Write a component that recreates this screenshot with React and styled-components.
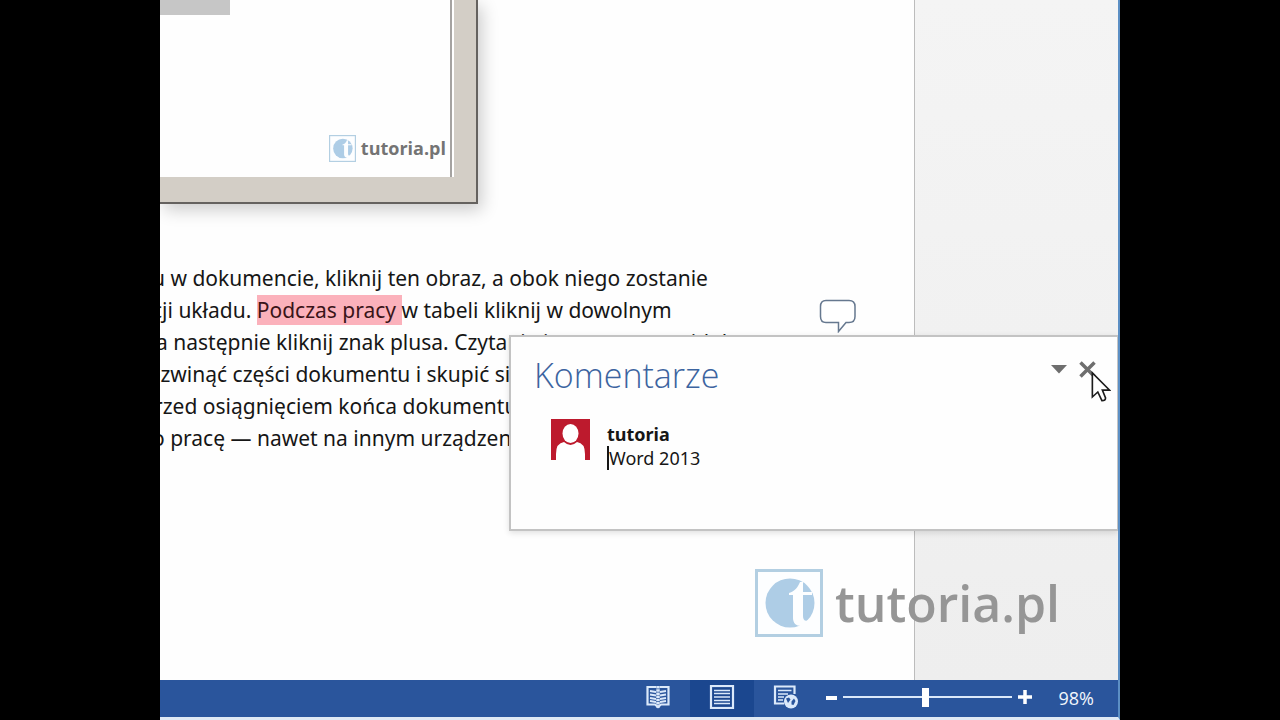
import React, { useState } from "react";
import styled, { createGlobalStyle } from "styled-components";

const lines = [
  { cut: 8, text: "u w dokumencie, kliknij ten obraz, a obok niego zostanie" },
  { cut: 8, text: "cji układu. ", marked: "Podczas pracy ", rest: "w tabeli kliknij w dowolnym" },
  { cut: 4, text: "a następnie kliknij znak plusa. Czytanie jest proste w widoku" },
  { cut: 12, text: "ozwinąć części dokumentu i skupić się" },
  { cut: 6, text: "rzed osiągnięciem końca dokumentu" },
  { cut: 8, text: "o pracę — nawet na innym urządzeniu" },
];

const Logo = ({ size }) => (
  <svg width={size} height={size} viewBox="0 0 68 68" aria-hidden="true">
    <rect x="1.5" y="1.5" width="65" height="65" fill="#fdfeff" stroke="#b3cfe2" strokeWidth="3" />
    <circle cx="35" cy="34" r="24.5" fill="#aecde6" />
    <path
      d="M34 24C40 22 43 18 45 13h3v10h9v3h-9v21c0 5 3 6 8 3l1 2c-3 4-7 5-11 5c-5 0-8-3-8-8V26h-4z"
      fill="#fdfeff"
    />
  </svg>
);

const App = () => {
  const [zoom, setZoom] = useState(98);
  const [comment, setComment] = useState("Word 2013");

  return (
    <Screen>
      <GlobalStyle />
      <Word>
        <Canvas>
          <Page>
            <Picture>
              <PictureInside>
                <GreyBlock />
                <SmallBrand>
                  <Logo size={27} />
                  <span>tutoria.pl</span>
                </SmallBrand>
              </PictureInside>
            </Picture>
            <Paragraph>
              {lines.map((line) => (
                <Line key={line.text} $cut={line.cut}>
                  {line.text}
                  {line.marked && <Marked>{line.marked}</Marked>}
                  {line.rest}
                </Line>
              ))}
            </Paragraph>
            <CommentMark type="button" aria-label="Komentarz">
              <svg width="38" height="34" viewBox="0 0 38 34">
                <path
                  d="M7 1.500H30Q36 1.500 36 7.500V17.500Q36 23.500 30 23.500H27L19.500 32.500V23.500H7Q1.500 23.500 1.500 17.500V7.500Q1.500 1.500 7 1.500Z"
                  fill="#fff"
                  stroke="#66788f"
                  strokeWidth="1.500"
                />
              </svg>
            </CommentMark>
          </Page>
          <Watermark>
            <Logo size={68} />
            <span>tutoria.pl</span>
          </Watermark>
        </Canvas>

        <Panel>
          <PanelHeader>
            <h2>Komentarze</h2>
            <PanelButton type="button" aria-label="Opcje">
              <svg width="16" height="9" viewBox="0 0 16 9">
                <path d="M0 0H16L8 8.500Z" fill="#6e6e6e" />
              </svg>
            </PanelButton>
            <PanelButton type="button" aria-label="Zamknij">
              <svg width="17" height="17" viewBox="0 0 17 17">
                <path d="M1.500 1.500L15.500 15.500M15.500 1.500L1.500 15.500" stroke="#6e6e6e" strokeWidth="3.500" />
              </svg>
            </PanelButton>
          </PanelHeader>
          <Comment>
            <svg width="39" height="41" viewBox="0 0 39 41" aria-hidden="true">
              <rect width="39" height="41" fill="#bd1a2d" />
              <ellipse cx="19.500" cy="14.500" rx="8" ry="9.500" fill="#fff" />
              <path d="M5 41V35Q5 24 13 23Q19.500 29 26 23Q34 24 34 35V41Z" fill="#fff" />
            </svg>
            <CommentBody>
              <label htmlFor="comment">tutoria</label>
              <CommentField>
                <Caret />
                <input id="comment" type="text" value={comment} onChange={(e) => setComment(e.target.value)} />
              </CommentField>
            </CommentBody>
          </Comment>
        </Panel>

        <StatusBar>
          <ViewButton type="button" aria-label="Tryb odczytu">
            <svg width="24" height="24" viewBox="0 0 24 24" fill="none" stroke="#dbe9fa">
              <path d="M10 2H1.500V19.500H9L12 22L15 19.500H22.500V2H14" strokeWidth="2.200" />
              <path d="M12 1V23" strokeWidth="3.500" strokeDasharray="2.500 0.700" />
              <path
                d="M4 6L10 7M4 9.500L10 10.500M4 13L10 14M4 16L10 17M20 6L14 7M20 9.500L14 10.500M20 13L14 14M20 16L14 17"
                strokeWidth="1.800"
              />
            </svg>
          </ViewButton>
          <ViewButton type="button" aria-label="Układ wydruku" $active>
            <svg width="26" height="24" viewBox="0 0 26 24" fill="none" stroke="#dbe9fa">
              <rect x="2" y="1" width="22" height="22" strokeWidth="2.200" />
              <path d="M5 5.500H21M5 8.500H21M5 12H21M5 15.500H21M5 18.500H21" strokeWidth="1.600" />
            </svg>
          </ViewButton>
          <ViewButton type="button" aria-label="Układ sieci Web">
            <svg width="26" height="24" viewBox="0 0 26 24" fill="none" stroke="#dbe9fa">
              <path d="M11 18.500H2V1.500H21.500V9" strokeWidth="2.200" />
              <path d="M5 5.500H18.500M5 9H15M5 12H11M5 15H10" strokeWidth="1.700" />
              <circle cx="18" cy="16.500" r="7" fill="#dbe9fa" stroke="none" />
              <path d="M13 13.500L16 12.500L17.500 14.500L15 18ZM18.500 16.500L21 13.500L22.500 16L20.500 20L18.500 19.500Z" fill="#2a559c" stroke="none" />
            </svg>
          </ViewButton>
          <ZoomGroup>
            <ZoomButton type="button" aria-label="Pomniejsz" onClick={() => setZoom(zoom - 1)}>
              <svg width="14" height="14" viewBox="0 0 14 14">
                <path d="M3 8H14" stroke="#fff" strokeWidth="4" />
              </svg>
            </ZoomButton>
            <Slider
              type="range"
              aria-label="Powiększenie"
              min="0"
              max="200"
              value={zoom}
              onChange={(e) => setZoom(Number(e.target.value))}
            />
            <ZoomButton type="button" aria-label="Powiększ" onClick={() => setZoom(zoom + 1)}>
              <svg width="14" height="14" viewBox="0 0 14 14">
                <path d="M0 7H14M7 0V14" stroke="#fff" strokeWidth="3.500" />
              </svg>
            </ZoomButton>
          </ZoomGroup>
          <ZoomValue>{zoom}%</ZoomValue>
        </StatusBar>

        <Cursor width="20" height="32" viewBox="0 0 22 34" aria-hidden="true">
          <path
            d="M1.500 1.500V28L7.500 22.500L12 32Q16 32 16 29L12.500 20.500H20.500Z"
            fill="#fff"
            stroke="#1c1c1c"
            strokeWidth="1.800"
          />
        </Cursor>
      </Word>
    </Screen>
  );
};

const GlobalStyle = createGlobalStyle`
  body {
    margin: 0;
    background: #000;
  }

  *, *::before, *::after {
    box-sizing: border-box;
  }

  button {
    border: 0;
    padding: 0;
    background: none;
    display: flex;
    align-items: center;
    justify-content: center;
    cursor: pointer;
  }
`;

const Screen = styled.div`
  min-height: 100vh;
  display: flex;
  justify-content: center;
  font-family: "Open Sans", "Noto Sans", sans-serif;
`;

const Word = styled.main`
  position: relative;
  width: 75%;
  display: flex;
  flex-direction: column;
  overflow: hidden;
  border-right: 2px solid #5c8fc4;
  border-bottom: 3px solid #dfe9f4;
  background: #fff;
`;

const Canvas = styled.div`
  position: relative;
  flex: 1;
  display: flex;
  background: linear-gradient(#f4f4f4, #eeeeee);
`;

const Page = styled.article`
  position: relative;
  width: 78.8%;
  overflow: hidden;
  background: #fefefe;
  border-right: 1px solid #bcbcbc;
`;

const Picture = styled.div`
  width: 318px;
  height: 204px;
  padding: 0 22px 25px 0;
  background: #d3cec6;
  border-right: 2px solid #65625f;
  border-bottom: 2px solid #65625f;
  box-shadow: 4px 6px 16px rgba(0, 0, 0, 0.2);
`;

const PictureInside = styled.div`
  height: 100%;
  display: flex;
  flex-direction: column;
  justify-content: space-between;
  background: #fefefe;
  border-right: 2px solid #fff;
  box-shadow: inset -2px 0 0 #a5a3a1;
`;

const GreyBlock = styled.div`
  width: 70px;
  height: 15px;
  background: #c6c6c6;
`;

const SmallBrand = styled.div`
  display: flex;
  align-items: center;
  justify-content: flex-end;
  gap: 5px;
  padding: 0 6px 15px 0;
  color: #747474;
  font-size: 18px;
  font-weight: 700;
  line-height: 27px;
`;

const Paragraph = styled.div`
  padding-top: 58px;
  color: #161616;
  font-family: "Noto Sans", sans-serif;
  font-size: 21px;
  line-height: 32px;
`;

const Line = styled.div`
  margin-left: ${(props) => -props.$cut}px;
  white-space: pre;
`;

const Marked = styled.mark`
  padding: 1px 0;
  background: #fbb1bb;
  color: #3a1418;
`;

const CommentMark = styled.button`
  position: absolute;
  top: 299px;
  right: 57px;
`;

const Watermark = styled.div`
  position: absolute;
  right: 58px;
  bottom: 43px;
  display: flex;
  align-items: center;
  gap: 12px;
  color: #969696;
  font-size: 50px;
  font-weight: 600;
  line-height: 68px;
`;

const Panel = styled.section`
  position: absolute;
  top: 335px;
  right: 0;
  width: 609px;
  height: 196px;
  padding: 20px 21px 0 23px;
  background: #fefefe;
  border: 2px solid #c3c3c3;
  border-right-width: 1px;
  box-shadow: 0 2px 6px rgba(0, 0, 0, 0.12);
`;

const PanelHeader = styled.header`
  display: flex;
  align-items: flex-start;
  gap: 12px;

  h2 {
    flex: 1;
    margin: 0;
    color: #3c64a0;
    font-size: 34px;
    font-weight: 300;
    line-height: 36px;
  }
`;

const PanelButton = styled.button`
  height: 24px;
`;

const Comment = styled.div`
  display: flex;
  gap: 17px;
  padding: 26px 0 0 17px;
`;

const CommentBody = styled.div`
  color: #161616;
  font-family: "Noto Sans", sans-serif;
  font-size: 18px;
  line-height: 24px;

  label {
    display: block;
    padding-top: 3px;
    font-weight: 700;
  }
`;

const CommentField = styled.div`
  display: flex;
  align-items: center;

  input {
    width: 200px;
    height: 24px;
    padding: 0;
    border: 0;
    background: none;
    color: inherit;
    font: inherit;
  }
`;

const Caret = styled.span`
  width: 2px;
  height: 24px;
  background: #161616;
`;

const StatusBar = styled.footer`
  height: 37px;
  display: flex;
  align-items: center;
  justify-content: flex-end;
  padding-right: 24px;
  background: #2a559c;
`;

const ViewButton = styled.button`
  width: 64px;
  height: 37px;
  padding-bottom: 3px;
  background: ${(props) => (props.$active ? "#1b478f" : "transparent")};
`;

const ZoomGroup = styled.div`
  display: flex;
  align-items: center;
  gap: 6px;
  padding: 0 0 3px 5px;
`;

const ZoomButton = styled.button`
  width: 14px;
  height: 24px;
`;

const Slider = styled.input`
  width: 169px;
  height: 20px;
  margin: 0;
  appearance: none;
  background: linear-gradient(#dbe9fa, #dbe9fa) center / 100% 2px no-repeat;

  &::-webkit-slider-thumb {
    appearance: none;
    width: 7px;
    height: 19px;
    background: #fff;
  }
`;

const ZoomValue = styled.span`
  width: 62px;
  padding-bottom: 2px;
  color: #f2f7fd;
  font-size: 18px;
  text-align: right;
`;

const Cursor = styled.svg`
  position: absolute;
  top: 371px;
  right: 7px;
`;

export default App;
